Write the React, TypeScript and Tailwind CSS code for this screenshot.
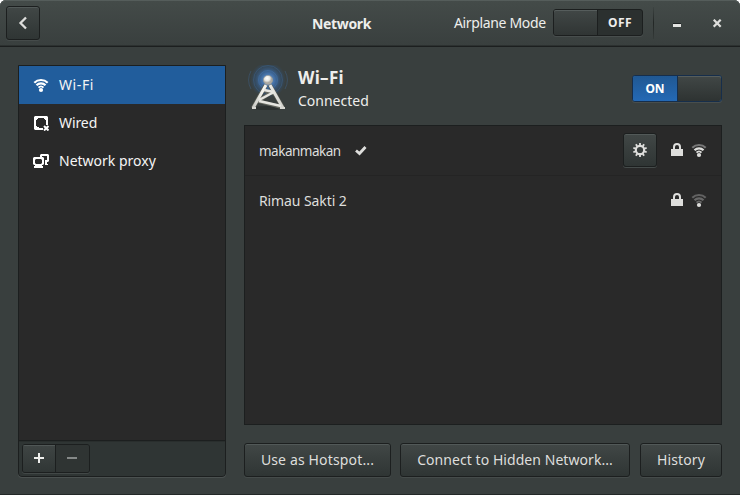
import React from "react";

const raised =
  "border border-[#1c1f1f] rounded-[3px] bg-gradient-to-b from-[#414746] to-[#2f3534] shadow-[inset_0_1px_0_#525958,0_1px_0_#454b4a]";

function WifiIcon({ outer = "#fff", middle = "#fff", inner = "#fff", dot = "#fff" }: { outer?: string; middle?: string; inner?: string; dot?: string }) {
  return (
    <svg width="16" height="16" viewBox="0 0 16 16" fill="none" strokeWidth="2.2">
      <path d="M1.3 5.7C5 2.1 11 2.1 14.7 5.7" stroke={outer} />
      <path d="M3.5 8.3C6 5.6 10 5.6 12.5 8.3" stroke={middle} />
      <path d="M5.5 10.6C7 8.9 9 8.9 10.5 10.6" stroke={inner} strokeWidth="1.9" />
      <circle cx="8" cy="13" r="2.1" fill={dot} />
    </svg>
  );
}

function WiredIcon() {
  return (
    <svg width="16" height="16" viewBox="0 0 16 16">
      <path fill="#fff" fillRule="evenodd" d="M2 1H14L15 2V10H13V5H12V4H11V3H5V4H4V5H3V11H4V12H6V13H10V15H2L1 14V2Z" />
      <path d="M11 11L15.5 15.5M15.5 11L11 15.5" stroke="#fff" strokeWidth="2" />
    </svg>
  );
}

function ProxyIcon() {
  return (
    <svg width="17" height="16" viewBox="0 0 17 16">
      <path fill="#fff" fillRule="evenodd" d="M8 1H15L16 2V8L15 9H14V11H15V12H12V7H14V3H9V4H7V2Z" />
      <path fill="#fff" fillRule="evenodd" d="M1 4H10L11 5V11L10 12H9V13H10V15H1V13H2V12H1L0 11V5ZM3 6L2 7V10L3 11H8L9 10V7L8 6Z" />
    </svg>
  );
}

function LockIcon() {
  return (
    <svg width="14" height="16" viewBox="0 0 14 16">
      <path d="M4 8V5A3 3 0 0 1 10 5V8" fill="none" stroke="#dededc" strokeWidth="2" />
      <path d="M1 7H13V14H1Z" fill="#dededc" />
    </svg>
  );
}

function GearIcon() {
  return (
    <svg width="16" height="16" viewBox="-8 -8 16 16" fill="none" stroke="#dededc">
      <circle r="4.2" strokeWidth="2.2" />
      {[0, 36, 72, 108, 144, 180, 216, 252, 288, 324].map((a) => (
        <path key={a} d="M0 -4.8V-7" strokeWidth="1.8" transform={`rotate(${a})`} />
      ))}
    </svg>
  );
}

function TowerIcon() {
  return (
    <svg width="42" height="46" viewBox="0 0 42 46" fill="none">
      <defs>
        <radialGradient id="signal">
          <stop offset="0" stopColor="#72a5df" />
          <stop offset="0.4" stopColor="#4170aa" stopOpacity="0.9" />
          <stop offset="0.72" stopColor="#315987" stopOpacity="0.45" />
          <stop offset="1" stopColor="#2b5688" stopOpacity="0" />
        </radialGradient>
        <radialGradient id="ball" cx="40%" cy="30%">
          <stop offset="0" stopColor="#fff" />
          <stop offset="0.6" stopColor="#e6e6e1" />
          <stop offset="1" stopColor="#aaa9a3" />
        </radialGradient>
        <linearGradient id="mast" x1="0" x2="1" y1="0" y2="0">
          <stop offset="0" stopColor="#c6c7c2" />
          <stop offset="0.35" stopColor="#f7f7f2" />
          <stop offset="1" stopColor="#d0d0cb" />
        </linearGradient>
      </defs>
      <circle cx="20" cy="15" r="18" fill="url(#signal)" />
      <g stroke="#4278b5">
        <path d="M3 6A19 19 0 0 0 3 24M37 6A19 19 0 0 1 37 24" opacity="0.3" />
        <circle cx="20" cy="15" r="14.5" opacity="0.28" />
        <circle cx="20" cy="15" r="9.5" opacity="0.45" />
      </g>
      <ellipse cx="20" cy="43" rx="16" ry="2" fill="#252a29" opacity="0.65" />
      <path d="M17.8 20L5 43M21.8 20L35 43" stroke="#555850" strokeWidth="4.3" />
      <path d="M15 25L27 29M25 26L12 35M10 36L33 42" stroke="#666961" strokeWidth="3.6" />
      <path d="M18 20L5 43M22 20L35 43" stroke="url(#mast)" strokeWidth="3" />
      <path d="M16 25L26 27M26 27L11 35M11 36L33 41" stroke="#e6e6e1" strokeWidth="2.4" />
      <path d="M4 43H8M32 43H37" stroke="#d7d7d2" strokeWidth="2" />
      <circle cx="20" cy="15" r="4.6" fill="url(#ball)" stroke="#a29d92" strokeWidth="0.6" />
    </svg>
  );
}

function NetworkRow({ children }: { children: React.ReactNode }) {
  return <div className="flex h-[50px] items-center pl-[14px] pr-[15px] text-[#dededc]">{children}</div>;
}

export default function App() {
  return (
    <div className="h-[495px] w-[740px] overflow-hidden bg-white font-['Noto_Sans',sans-serif] text-[14px] leading-5 text-[#eeeeec]">
      <div className="flex h-full flex-col rounded-t-[6px] border-b border-[#232827] bg-[#393f3e]">
        <header className="flex h-[47px] shrink-0 items-start rounded-t-[6px] border-b border-[#1c1f1f] bg-gradient-to-b from-[#444b49] to-[#393f3e] pl-[6px] shadow-[inset_0_1px_0_#555d5b,inset_0_-1px_0_#2c3130]">
          <button className={`mt-[6px] flex size-[34px] items-center justify-center ${raised}`}>
            <svg width="16" height="16" viewBox="0 0 16 16" fill="none" stroke="#dededc" strokeWidth="2.3"><path d="M11 2.5L5.5 8L11 13.5" /></svg>
          </button>
          <div className="ml-[272px] mt-[14px] w-[59px] whitespace-nowrap font-bold tracking-[-0.35px]">Network</div>
          <div className="ml-[83px] mt-[13px] w-[99px] whitespace-nowrap tracking-[-0.35px]">Airplane Mode</div>
          <div className="mt-[9px] flex h-[27px] w-[90px] rounded-[3px] border border-[#1c1f1f] bg-[#2b302f] shadow-[0_1px_0_#484e4d]">
            <div className="w-[44px] rounded-l-[2px] border-r border-[#1c1f1f] bg-gradient-to-b from-[#414746] to-[#303534] shadow-[inset_0_1px_0_#565d5c]" />
            <div className="flex flex-1 items-center justify-center text-[12px] font-bold tracking-[0.4px]">OFF</div>
          </div>
          <div className="ml-[10px] mt-[7px] h-[32px] w-px bg-gradient-to-b from-[#3d4442] via-[#222625] to-[#353b39]" />
          <div className="ml-[19px] mt-[24px] h-[3px] w-[8px] bg-[#e4e4e2] shadow-[0_-1px_0_#202424]" />
          <svg className="ml-[32px] mt-[19px]" width="9" height="9" viewBox="0 0 9 9" stroke="#dededc" strokeWidth="2.2"><path d="M0.7 0.7L7.7 7.7M7.7 0.7L0.7 7.7" /></svg>
        </header>

        <main className="flex flex-1 px-[18px] pb-[17px] pt-[18px]">
          <aside className="flex h-[412px] w-[208px] flex-col overflow-hidden rounded-b-[4px] border border-[#1c1f1f] bg-[#292929] shadow-[0_1px_0_#4b5150]">
            <nav className="flex-1 text-[#f5f5f5]">
              <div className="flex h-[38px] items-center bg-[#215d9c] pl-[14px]">
                <WifiIcon /><span className="ml-[10px] tracking-[0.6px]">Wi-Fi</span>
              </div>
              <div className="flex h-[38px] items-center pl-[14px]">
                <WiredIcon /><span className="ml-[10px] tracking-[-0.1px]">Wired</span>
              </div>
              <div className="flex h-[38px] items-center pl-[14px]">
                <ProxyIcon /><span className="ml-[9px] whitespace-nowrap">Network proxy</span>
              </div>
            </nav>
            <div className="flex h-[36px] items-start border-t border-[#1c1f1f] bg-[#2f3534] px-[3px] pt-[3px] shadow-[inset_0_1px_0_#292e2d]">
              <div className="flex h-[29px] w-[68px] overflow-hidden rounded-[3px] border border-[#1c1f1f] shadow-[0_1px_0_#424847]">
                <button className="flex w-[33px] items-center justify-center border-r border-[#1c1f1f] bg-gradient-to-b from-[#3f4544] to-[#303635] shadow-[inset_0_1px_0_#505756]">
                  <svg className="-mt-px" width="10" height="10" viewBox="0 0 10 10" fill="#eeeeec"><path d="M4 0H6V4H10V6H6V10H4V6H0V4H4Z" /></svg>
                </button>
                <button className="flex flex-1 items-center justify-center bg-[#2f3433] pr-px"><span className="-mt-px h-[2px] w-[10px] bg-[#858988]" /></button>
              </div>
            </div>
          </aside>

          <section className="ml-[18px] w-[478px]">
            <div className="flex h-[60px] items-start pl-[4px]">
              <TowerIcon />
              <div className="ml-[8px] w-[334px]">
                <div className="mt-[2px] h-[22px] text-[17px] font-bold leading-[22px] tracking-[0.3px]">Wi–Fi</div>
                <div className="mt-[2px]">Connected</div>
              </div>
              <div className="mt-[10px] flex h-[27px] w-[90px] rounded-[3px] border border-[#162e4b] bg-[#246bb8] shadow-[0_1px_0_#484e4d]">
                <div className="flex w-[44px] items-center justify-center rounded-l-[2px] bg-gradient-to-b from-[#205893] to-[#2469b5] text-[12px] font-bold text-white">ON</div>
                <div className="flex-1 rounded-r-[2px] border-l border-[#162e4b] bg-gradient-to-b from-[#414746] to-[#2e3332] shadow-[inset_0_1px_0_#565d5c]" />
              </div>
            </div>

            <div className="h-[300px] border border-[#1c1f1f] bg-[#292929]">
              <NetworkRow>
                <span className="w-[96px] whitespace-nowrap text-[13.5px] tracking-[-0.5px]">makanmakan</span>
                <svg width="12" height="12" viewBox="0 0 12 12" fill="none" stroke="#dededc" strokeWidth="2.8"><path d="M1 5.5L4.5 8.5L10.5 2" /></svg>
                <button className={`-mt-[2px] ml-auto flex size-[34px] items-center justify-center ${raised}`}><GearIcon /></button>
                <span className="-mt-[2px] ml-[13px]"><LockIcon /></span>
                <span className="-mt-[2px] ml-[7px] w-[15px]"><WifiIcon outer="#777" middle="#dededc" inner="#dededc" dot="#dededc" /></span>
              </NetworkRow>
              <div className="-mt-px h-px bg-[#242424]" />
              <NetworkRow>
                <span className="whitespace-nowrap tracking-[-0.1px]">Rimau Sakti 2</span>
                <span className="-mt-[2px] ml-auto"><LockIcon /></span>
                <span className="-mt-[2px] ml-[7px] w-[15px]"><WifiIcon outer="#626262" middle="#686868" inner="#686868" dot="#dededc" /></span>
              </NetworkRow>
            </div>

            <div className="mt-[18px] flex h-[34px] text-[#dededc] [text-shadow:0_-1px_0_#1f2423]">
              <button className={`w-[147px] whitespace-nowrap tracking-[0.15px] ${raised}`}>Use as Hotspot...</button>
              <button className={`ml-[9px] w-[230px] whitespace-nowrap tracking-[0.06px] ${raised}`}>Connect to Hidden Network...</button>
              <button className={`ml-[10px] w-[82px] whitespace-nowrap tracking-[0.1px] ${raised}`}>History</button>
            </div>
          </section>
        </main>
      </div>
    </div>
  );
}
